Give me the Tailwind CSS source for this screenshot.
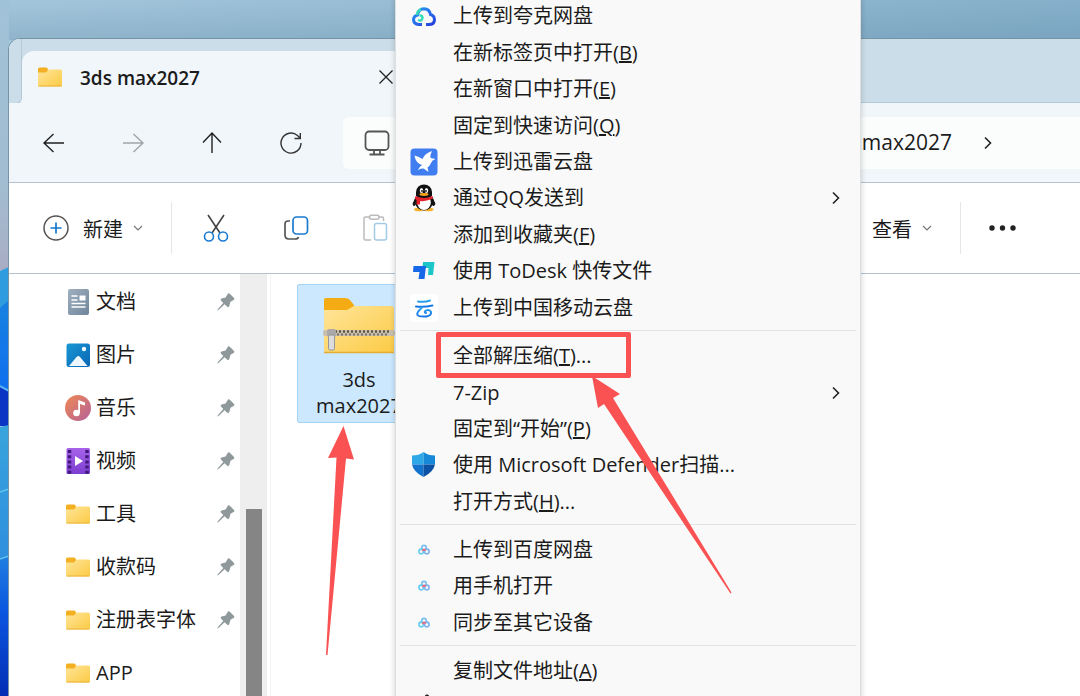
<!DOCTYPE html>
<html lang="zh-CN">
<head>
  <meta charset="UTF-8" />
  <meta name="viewport" content="width=device-width, initial-scale=1.0" />
  <title>3ds max2027</title>
  <script src="https://cdn.jsdelivr.net/npm/@tailwindcss/browser@4"></script>
</head>
<body class="relative flex flex-col h-screen overflow-hidden font-['Open_Sans','Noto_Sans_CJK_SC',sans-serif] text-xl text-[#1b1b1b]">

  <!-- 图标 -->
  <svg class="absolute w-0 h-0">
    <linearGradient id="g-folder" x1="0" y1="0" x2="1" y2="1">
      <stop offset="0" stop-color="#ffe59a" /><stop offset="1" stop-color="#fccb45" />
    </linearGradient>
    <linearGradient id="g-doc" x1="0" y1="0" x2="1" y2="1">
      <stop offset="0" stop-color="#9fb0c0" /><stop offset="1" stop-color="#70859b" />
    </linearGradient>
    <linearGradient id="g-music" x1="0" y1="0" x2="1" y2="1">
      <stop offset="0" stop-color="#f08a52" /><stop offset="1" stop-color="#b4609a" />
    </linearGradient>
    <linearGradient id="g-video" x1="0" y1="0" x2="0" y2="1">
      <stop offset="0" stop-color="#a862ea" /><stop offset="1" stop-color="#7c3fd0" />
    </linearGradient>
    <linearGradient id="g-pic" x1="0" y1="0" x2="1" y2="1">
      <stop offset="0" stop-color="#1897d4" /><stop offset="1" stop-color="#0a66b4" />
    </linearGradient>
    <linearGradient id="g-quark" x1="0" y1="0" x2="1" y2="1">
      <stop offset="0" stop-color="#2a9cf5" /><stop offset="1" stop-color="#2440dc" />
    </linearGradient>
    <linearGradient id="g-yun" x1="0" y1="0" x2="0" y2="1">
      <stop offset="0" stop-color="#2aa6ea" /><stop offset="1" stop-color="#1673e6" />
    </linearGradient>
    <symbol id="folder" viewBox="0 0 24 20">
      <path d="M0 2Q0 .5 1.500 .5H8Q9 .5 9.500 1.500L10 3V7H0Z" fill="#f4b022" />
      <path d="M0 5.500H8L10.500 2.500H22.500Q24 2.500 24 4V18Q24 19.500 22.500 19.500H1.500Q0 19.500 0 18Z" fill="url(#g-folder)" />
      <path d="M.5 19H23.500" stroke="#e9b23c" />
    </symbol>
    <symbol id="pin" viewBox="0 0 18 18">
      <path d="M11 .5Q12 0 12.800 .8L17 5Q17.800 6 17 6.800L13.500 8.800 12.300 13Q11.500 14.800 10.300 13.800L7.600 11.200 2 16.600Q.6 17.800 .4 17.400 .1 16.900 1.400 15.500L6.300 10 3.900 7.500Q3 6 4.600 5.500L8.600 4.400Z" fill="#8f999b" />
    </symbol>
    <symbol id="baidu" viewBox="0 0 12 12">
      <g fill="none" stroke-width="1.600">
        <circle cx="6" cy="3.700" r="2.300" stroke="#7cc0ee" />
        <circle cx="3.200" cy="7.400" r="2.300" stroke="#62cbf0" />
        <circle cx="8.800" cy="7.400" r="2.300" stroke="#7ab2ee" />
        <path d="M4.300 6.800 6 5.300 7.800 6.500" stroke="#ef6a7d" />
      </g>
    </symbol>
    <symbol id="right" viewBox="0 0 8 14"><path d="M1 1.500 6.500 7 1 12.500" fill="none" stroke="#222" stroke-width="1.600" /></symbol>
    <symbol id="down" viewBox="0 0 10 6"><path d="M1 1 5 5 9 1" fill="none" stroke="#777" stroke-width="1.200" /></symbol>
  </svg>

  <!-- 壁纸 -->
  <div class="absolute inset-0 -z-10 bg-linear-to-r from-[#a4c6db] to-[#85afca]"></div>
  <div class="absolute inset-x-0 top-0 h-10 -z-10 bg-linear-to-b from-transparent to-[#5f8ba5]/30"></div>
  <svg class="absolute left-0 top-0 w-[9px] h-[696px]" viewBox="0 0 9 696" preserveAspectRatio="none">
    <linearGradient id="w0" x1="0" y1="0" x2="0" y2="1"><stop offset="0" stop-color="#a0c2d8" /><stop offset=".7" stop-color="#a2bcd0" /><stop offset="1" stop-color="#a9adc4" /></linearGradient>
    <linearGradient id="w1" x1="0" y1="0" x2="0" y2="1"><stop offset="0" stop-color="#1782e0" /><stop offset="1" stop-color="#0f6ef0" /></linearGradient>
    <linearGradient id="w2" x1="0" y1="0" x2="0" y2="1"><stop offset="0" stop-color="#38a4dc" /><stop offset="1" stop-color="#2f8fdf" /></linearGradient>
    <linearGradient id="w3" x1="0" y1="0" x2="0" y2="1"><stop offset="0" stop-color="#1f7fe0" /><stop offset=".4" stop-color="#0b56e0" /><stop offset="1" stop-color="#022db4" /></linearGradient>
    <rect width="9" height="270" fill="url(#w0)" />
    <path d="M0 271 9 267V310H0Z" fill="#2f9ce0" />
    <path d="M0 308 9 300V395H0Z" fill="url(#w1)" />
    <path d="M0 386 9 392V426H0Z" fill="#0a35c4" />
    <path d="M0 386 9 391" stroke="#58b8f0" stroke-width="2" />
    <path d="M0 427 9 425V560H0Z" fill="url(#w2)" />
    <path d="M0 559 9 556V696H0Z" fill="url(#w3)" />
    <path d="M0 492 9 489M0 559 9 556" stroke="#63c3ee" stroke-width="1.500" />
  </svg>

  <!-- 资源管理器窗口 -->
  <main class="relative flex-1 flex flex-col min-h-0 ml-2 mt-[38px] border-t border-l border-[#7594a8] rounded-tl-xl overflow-hidden bg-white">
    <!-- 标签栏 -->
    <header class="flex h-16 shrink-0 pt-3 bg-[#cbdde8] border-b border-[#b4c8d6]">
      <div class="w-[13px] -mb-px bg-[#f0f6fa]"><div class="h-full -mt-3 pt-3 box-content bg-[#cbdde8] border-b border-r border-[#b4c8d6] rounded-br-md"></div></div>
      <div class="flex items-center w-[398px] -mb-px pl-4 pr-[26px] bg-[#f0f6fa] rounded-t-xl">
        <svg class="w-6 h-5"><use href="#folder" /></svg>
        <h1 class="ml-[18px] pt-[3px] text-[19px] font-semibold">3ds max2027</h1>
        <button aria-label="关闭" class="ml-auto">
          <svg class="w-4 h-4" viewBox="0 0 16 16"><path d="M1.500 1.500 14.500 14.500M14.500 1.500 1.500 14.500" stroke="#222" stroke-width="1.300" /></svg>
        </button>
      </div>
    </header>

    <!-- 导航栏 -->
    <div class="flex items-center h-20 shrink-0 pl-8 bg-[#f0f6fa] border-b border-[#b8c1cf]">
      <div class="flex gap-[53px]">
        <button aria-label="后退"><svg class="w-[26px] h-[26px]" viewBox="0 0 26 26" fill="none" stroke="#222" stroke-width="1.400"><path d="M23 13H3M12.500 4 3 13 12.500 22" /></svg></button>
        <button aria-label="前进"><svg class="w-[26px] h-[26px]" viewBox="0 0 26 26" fill="none" stroke="#9fa5a9" stroke-width="1.400"><path d="M3 13H23M13.500 4 23 13 13.500 22" /></svg></button>
        <button aria-label="上移"><svg class="w-[26px] h-[26px]" viewBox="0 0 26 26" fill="none" stroke="#222" stroke-width="1.400"><path d="M13 23V3M4 12.500 13 3 22 12.500" /></svg></button>
        <button aria-label="刷新"><svg class="w-[26px] h-[26px]" viewBox="0 0 26 26" fill="none" stroke="#333" stroke-width="1.400"><path d="M23 13A10 10 0 1 1 19.500 5.500L22 8M22.300 3V8.500H16.500" /></svg></button>
      </div>
      <div class="flex-1 flex items-center h-[52px] ml-[39px] pl-[21px] pr-[88px] bg-[#fbfdfd] rounded-l-md">
        <svg class="w-[26px] h-[26px]" viewBox="0 0 26 26" fill="none" stroke="#555" stroke-width="1.800"><rect x="1.500" y="1.500" width="23" height="18.500" rx="3.500" /><path d="M10 20V24M16 20V24M5.500 24.500H20.500" /></svg>
        <span class="ml-auto pt-px text-[21px]">max2027</span>
        <svg class="w-2 h-[14px] ml-8"><use href="#right" /></svg>
      </div>
    </div>

    <!-- 工具栏 -->
    <div class="flex items-center h-[91px] shrink-0 pl-[34px] pr-16 border-b border-[#b3c3d2]">
      <button class="flex items-center">
        <svg class="w-[26px] h-[26px]" viewBox="0 0 26 26" fill="none"><circle cx="13" cy="13" r="12" stroke="#555" stroke-width="1.500" /><path d="M13 7.500V18.500M7.500 13H18.500" stroke="#0f76cc" stroke-width="1.700" /></svg>
        <span class="ml-[14px] pt-[3px]">新建</span>
        <svg class="w-[10px] h-[6px] ml-[10px]"><use href="#down" /></svg>
      </button>
      <div class="w-px h-[52px] ml-7 bg-[#e4e6e8]"></div>
      <div class="flex gap-[52px] ml-[30px]">
        <button aria-label="剪切"><svg class="w-7 h-7" viewBox="0 0 28 28" fill="none" stroke-width="1.600"><path d="M6 1 18 19M22 1 10 19" stroke="#444" /><circle cx="7" cy="22.500" r="4.500" stroke="#1a7bd0" /><circle cx="21" cy="22.500" r="4.500" stroke="#1a7bd0" /></svg></button>
        <button aria-label="复制"><svg class="w-7 h-7" viewBox="0 0 28 28" fill="none" stroke-width="1.700"><path d="M8 7H6Q3 7 3 10V21Q3 25 7 25H13Q16 25 16.500 23" stroke="#555" /><rect x="11" y="3" width="14.500" height="17" rx="3.500" stroke="#1a7bd0" /></svg></button>
        <button aria-label="粘贴"><svg class="w-7 h-7" viewBox="0 0 28 28" fill="none" stroke-width="1.500"><path d="M8 3H3.500Q2 3 2 4.500V24.500Q2 26 3.500 26H9M17 3H20Q21.500 3 21.500 4.500V7" stroke="#bbb" /><rect x="7.500" y="1.200" width="9.500" height="4" rx="2" stroke="#bbb" /><rect x="12.500" y="9.500" width="12" height="16.500" rx="2" stroke="#a3cae4" /></svg></button>
      </div>
      <button class="flex items-center ml-auto">
        <span class="pt-[3px]">查看</span>
        <svg class="w-[10px] h-[6px] ml-[10px]"><use href="#down" /></svg>
      </button>
      <div class="w-px h-[52px] mx-7 bg-[#e4e6e8]"></div>
      <button aria-label="更多"><svg class="w-[27px] h-[6px]" viewBox="0 0 27 6" fill="#222"><circle cx="3" cy="3" r="2.700" /><circle cx="13.500" cy="3" r="2.700" /><circle cx="24" cy="3" r="2.700" /></svg></button>
    </div>

    <div class="flex flex-1 min-h-0">
      <!-- 侧边栏 -->
      <nav class="w-[231px] shrink-0 pt-px pl-14 pr-[5px]">
        <a href="#" class="flex items-center h-[53px]">
          <svg class="w-[26px] h-7" viewBox="0 0 26 28"><rect x="3" y="1" width="21" height="26" rx="2" fill="url(#g-doc)" /><path d="M6.500 8H12.500M6.500 12H12.500M6.500 15.500H20.500M6.500 19H20.500" stroke="#fff" stroke-width="1.700" /><rect x="14.500" y="7.500" width="6" height="5" fill="#fff" /></svg>
          <span class="ml-[5px]">文档</span><svg class="w-[18px] h-[18px] ml-auto"><use href="#pin" /></svg>
        </a>
        <a href="#" class="flex items-center h-[53px]">
          <svg class="w-[26px] h-7" viewBox="0 0 26 28"><rect x="1.500" y="2.500" width="23.500" height="23.500" rx="2.500" fill="url(#g-pic)" /><path d="M4 25 11.500 16Q13.200 14 15 16L22.500 25Z" fill="#eef7fd" /><circle cx="19" cy="8" r="2.200" fill="#eef7fd" /></svg>
          <span class="ml-[5px]">图片</span><svg class="w-[18px] h-[18px] ml-auto"><use href="#pin" /></svg>
        </a>
        <a href="#" class="flex items-center h-[53px]">
          <svg class="w-[26px] h-7" viewBox="0 0 26 28"><circle cx="13" cy="14" r="13" fill="url(#g-music)" /><path d="M13.200 19V6L20 8.500V11.500L15 10V19Z" fill="#fff" /><circle cx="11.500" cy="19" r="3.300" fill="#fff" /></svg>
          <span class="ml-[5px]">音乐</span><svg class="w-[18px] h-[18px] ml-auto"><use href="#pin" /></svg>
        </a>
        <a href="#" class="flex items-center h-[53px]">
          <svg class="w-[26px] h-7" viewBox="0 0 26 28"><rect x="1.500" y="1" width="23.500" height="26" rx="1.500" fill="url(#g-video)" /><path d="M4.500 3V27M22 3V27" stroke="#41197c" stroke-width="3.500" stroke-dasharray="3 2.200" /><path d="M10 9 18 14 10 19Z" fill="#fff" /></svg>
          <span class="ml-[5px]">视频</span><svg class="w-[18px] h-[18px] ml-auto"><use href="#pin" /></svg>
        </a>
        <a href="#" class="flex items-center h-[53px]">
          <svg class="w-6 h-5 ml-px"><use href="#folder" /></svg>
          <span class="ml-[6px]">工具</span><svg class="w-[18px] h-[18px] ml-auto"><use href="#pin" /></svg>
        </a>
        <a href="#" class="flex items-center h-[53px]">
          <svg class="w-6 h-5 ml-px"><use href="#folder" /></svg>
          <span class="ml-[6px]">收款码</span><svg class="w-[18px] h-[18px] ml-auto"><use href="#pin" /></svg>
        </a>
        <a href="#" class="flex items-center h-[53px]">
          <svg class="w-6 h-5 ml-px"><use href="#folder" /></svg>
          <span class="ml-[6px]">注册表字体</span><svg class="w-[18px] h-[18px] ml-auto"><use href="#pin" /></svg>
        </a>
        <a href="#" class="flex items-center h-[53px]">
          <svg class="w-6 h-5 ml-px"><use href="#folder" /></svg>
          <span class="ml-[6px]">APP</span>
        </a>
      </nav>
      <div class="w-[27px] shrink-0 pt-[235px] pl-[6px] bg-[#eee]">
        <div class="w-4 h-full bg-[#858585]"></div>
      </div>
      <div class="w-1 shrink-0 border-r border-[#f3f3f3]"></div>

      <!-- 文件列表 -->
      <section class="flex-1 pt-[10px] pl-[26px]">
        <a href="#" class="flex flex-col items-center w-[124px] h-[139px] pt-3 bg-[#cce8ff] border border-[#a5d3f5] rounded-xs">
          <svg class="w-[72px] h-[58px]" viewBox="0 0 72 58">
            <path d="M1 3Q1 1 3 1H22Q25 1 27 3L31 8V14H1Z" fill="#f5ab14" />
            <path d="M1 13H24L31 9H68Q71 9 71 12V53Q71 56 68 56H4Q1 56 1 53Z" fill="url(#g-folder)" />
            <path d="M1 55.500H71" stroke="#e2ad35" stroke-width="1.500" />
            <rect x="0" y="33" width="72" height="6" rx="2" fill="#c9bfae" />
            <path d="M12 34.500H66" stroke="#5e5542" stroke-width="2.500" stroke-dasharray="2 2" />
            <path d="M14 37.500H66" stroke="#7a705c" stroke-width="2" stroke-dasharray="2 2" />
            <rect x="4" y="32" width="9" height="8" rx="2" fill="#aaa9a8" />
            <rect x="5.500" y="38" width="6" height="15" rx="1.500" fill="#dcdcdc" stroke="#969696" />
          </svg>
          <span class="mt-3 leading-[26px] text-center">3ds<br />max2027</span>
        </a>
      </section>
    </div>
  </main>

  <!-- 右键菜单 -->
  <div role="menu" class="absolute left-[395px] -top-0.5 w-[466px] pl-1 pr-1 bg-[#f9f9f9] border-x border-[#dcdfe2] shadow-[0_0_6px_rgba(0,0,0,0.2)]">
    <div class="grid auto-rows-fr h-[328px] pl-[10px] pr-4 *:flex *:items-center *:text-left">
      <button role="menuitem">
        <svg class="w-7 h-7 mr-[15px]" viewBox="0 0 28 28" fill="none" stroke-width="3"><path d="M12 22.500H8.500Q4 22 3.500 18 3.500 14 7.500 13 8.500 7 14 6.800 19.500 7 20.500 12.500 24.500 13.500 24.500 18 24 22.500 19 22.500H16" stroke="url(#g-quark)" /><path d="M7 13Q7.500 8 11 7.500M8 18Q12 20 12.500 15.500 12 13 9.500 13.500" stroke="#35dcb8" stroke-width="2.500" /></svg>
        上传到夸克网盘
      </button>
      <button role="menuitem" class="pl-[43px]">在新标签页中打开(<u>B</u>)</button>
      <button role="menuitem" class="pl-[43px]">在新窗口中打开(<u>E</u>)</button>
      <button role="menuitem" class="pl-[43px]">固定到快速访问(<u>Q</u>)</button>
      <button role="menuitem">
        <svg class="w-7 h-7 mr-[15px]" viewBox="0 0 28 28"><rect x=".5" y=".5" width="27" height="27" rx="4" fill="#3f7df0" /><path d="M4.500 7.500Q9 8.500 12.500 11 14.500 5.500 22 3 20 6.500 20.500 10L25.500 11Q22 12 21 15 19.500 18.500 17.500 19.500L18.500 24Q15.500 21.500 13.500 20.500 10 20 7.500 22.500 9 19 12 17 5.500 15 4.500 7.500Z" fill="#fff" /></svg>
        上传到迅雷云盘
      </button>
      <button role="menuitem">
        <svg class="w-7 h-7 mr-[15px]" viewBox="0 0 28 28">
          <ellipse cx="9" cy="25.500" rx="5" ry="1.800" fill="#f6b22a" /><ellipse cx="18.500" cy="25.500" rx="5" ry="1.800" fill="#f6b22a" />
          <path d="M6 13 3 20Q3.500 23 5.500 20.500M22 13 25 20Q24 23 22 20.500" fill="#111" stroke="#111" />
          <ellipse cx="14" cy="18" rx="9" ry="8.500" fill="#111" /><ellipse cx="14" cy="18.500" rx="6.800" ry="7.500" fill="#fff" />
          <path d="M6 12V8Q7 .5 14 .5 21 .5 22 8V12Q14 18 6 12Z" fill="#111" />
          <ellipse cx="11.500" cy="6.500" rx="1.700" ry="2.500" fill="#fff" /><ellipse cx="16.500" cy="6.500" rx="1.700" ry="2.500" fill="#fff" />
          <circle cx="12" cy="7" r=".9" fill="#111" /><circle cx="16" cy="7" r=".9" fill="#111" />
          <ellipse cx="14" cy="10.500" rx="4.500" ry="1.400" fill="#f6a31a" />
          <path d="M5.500 12Q14 16 22.500 12L23 14.500Q14 18 10 17V20.500H6.500V16L5 14.500Z" fill="#e3222c" />
        </svg>
        通过QQ发送到
        <svg class="w-2 h-[14px] ml-auto"><use href="#right" /></svg>
      </button>
      <button role="menuitem" class="pl-[43px]">添加到收藏夹(<u>F</u>)</button>
      <button role="menuitem">
        <svg class="w-7 h-7 mr-[15px]" viewBox="0 0 28 28"><path d="M13 5H24.500L23 18H18L18.500 11H12.500Z" fill="#1cc6c8" /><path d="M3.500 9H16L14.500 22H8.500L9.500 15H3Z" fill="#1668e8" /></svg>
        使用 ToDesk 快传文件
      </button>
      <button role="menuitem">
        <svg class="w-7 h-7 mr-[15px]" viewBox="0 0 28 28"><rect width="28" height="28" rx="3" fill="#fff" /><g fill="none" stroke="url(#g-yun)" stroke-width="2" stroke-linecap="round"><path d="M8 7.500Q15 8.500 20 6.500M6 12.500Q14 13.500 22.500 11.500" /><path d="M12 13.500Q6 19 7.500 21 9 23 16.500 22.500 21.500 21.500 21 18 19.500 15 16 16.500 13.500 18 16 19" /></g></svg>
        上传到中国移动云盘
      </button>
    </div>
    <hr class="mt-1 mb-[7px] border-[#e2e3e4]" />
    <div class="grid auto-rows-fr h-[182px] pl-[10px] pr-4 *:flex *:items-center *:text-left">
      <button role="menuitem" class="pl-[43px]">全部解压缩(<u>T</u>)...</button>
      <button role="menuitem" class="pl-[43px]">7-Zip<svg class="w-2 h-[14px] ml-auto"><use href="#right" /></svg></button>
      <button role="menuitem" class="pl-[43px]">固定到“开始”(<u>P</u>)</button>
      <button role="menuitem">
        <svg class="w-7 h-7 mr-[15px]" viewBox="0 0 28 28"><path d="M2 4.500Q9 4.500 13.500 1V13.500H2Z" fill="#2fa8e8" /><path d="M25 4.500Q18 4.500 13.500 1V13.500H25Z" fill="#1787d8" /><path d="M2 13.500H13.500V26Q3.500 21 2 13.500Z" fill="#1273cc" /><path d="M25 13.500H13.500V26Q23.500 21 25 13.500Z" fill="#0d51a4" /></svg>
        使用 Microsoft Defender扫描...
      </button>
      <button role="menuitem" class="pl-[43px]">打开方式(<u>H</u>)...</button>
    </div>
    <hr class="mt-1 mb-[7px] border-[#e2e3e4]" />
    <div class="grid auto-rows-fr h-[109px] pl-[18px] pr-4 *:flex *:items-center *:text-left">
      <button role="menuitem"><svg class="w-3 h-3 mr-[23px]"><use href="#baidu" /></svg>上传到百度网盘</button>
      <button role="menuitem"><svg class="w-3 h-3 mr-[23px]"><use href="#baidu" /></svg>用手机打开</button>
      <button role="menuitem"><svg class="w-3 h-3 mr-[23px]"><use href="#baidu" /></svg>同步至其它设备</button>
    </div>
    <hr class="mt-1 mb-[7px] border-[#e2e3e4]" />
    <div class="grid auto-rows-fr h-[73px] pl-[10px] pr-4 *:flex *:items-center *:text-left">
      <button role="menuitem" class="pl-[43px]">复制文件地址(<u>A</u>)</button>
      <button role="menuitem" aria-label="共享"><svg class="w-7 h-7" viewBox="0 0 28 28"><path d="M17 1 23 7M17 1 11 7" stroke="#222" stroke-width="1.800" /></svg></button>
    </div>
  </div>

  <!-- 标注 -->
  <div class="absolute left-[436px] top-[332px] w-[195px] h-[46px] border-[5px] border-[#fa5252] rounded-xs"></div>
  <svg class="absolute left-0 top-0 w-[1080px] h-[696px] pointer-events-none" viewBox="0 0 1080 696" fill="#fa5252">
    <path d="M343.500 426 354 459.500 346 458.500 327.500 655H326L336.500 457.500 328 458Z" />
    <path d="M592 376 620 394 613 398 731.500 592.500 730.500 593.500 604 404 598 408Z" />
  </svg>
</body>
</html>
